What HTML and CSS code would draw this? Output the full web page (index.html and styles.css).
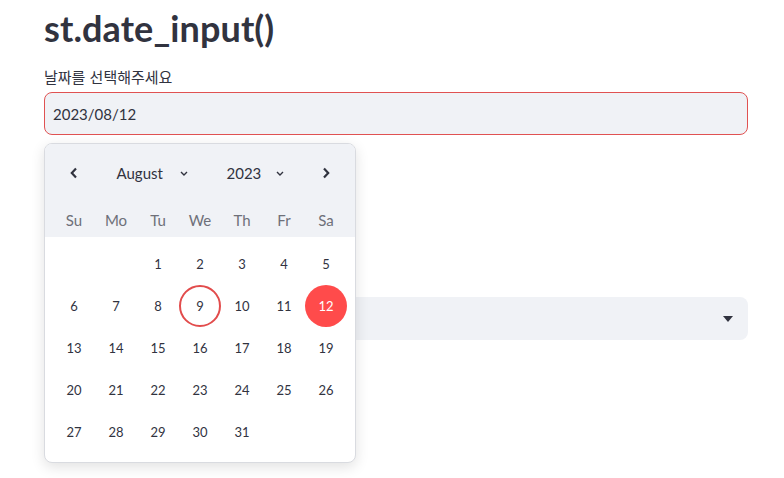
FILE: index.html
```html
<!DOCTYPE html>
<html lang="ko">
<head>
<meta charset="utf-8">
<link rel="stylesheet" href="styles.css">
</head>
<body>
<main class="main">
  <h1 class="title">st.date_input()</h1>
  <label class="label">날짜를 선택해주세요</label>
  <div class="date-input">2023/08/12</div>
  <div class="select-label">&nbsp;</div>
  <div class="selectbox">
    <svg class="caret" width="10" height="6" viewBox="0 0 10 6"><path d="M0 0 L10 0 L5 6 Z" fill="#31333f"/></svg>
  </div>
</main>

<div class="popover">
  <div class="cal-head">
    <div class="nav">
      <div class="nav-btn">
        <svg width="8" height="12" viewBox="0 0 8 12"><path d="M6 1.5 L1.8 6 L6 10.5" fill="none" stroke="#31333f" stroke-width="2.2" stroke-linejoin="miter"/></svg>
      </div>
      <div class="nav-mid">
        <div class="pick month">August
          <svg width="8" height="5" viewBox="0 0 8 5"><path d="M1 1 L4 4 L7 1" fill="none" stroke="#31333f" stroke-width="1.4"/></svg>
        </div>
        <div class="pick year">2023
          <svg width="8" height="5" viewBox="0 0 8 5"><path d="M1 1 L4 4 L7 1" fill="none" stroke="#31333f" stroke-width="1.4"/></svg>
        </div>
      </div>
      <div class="nav-btn">
        <svg width="8" height="12" viewBox="0 0 8 12"><path d="M2 1.5 L6.2 6 L2 10.5" fill="none" stroke="#31333f" stroke-width="2.2" stroke-linejoin="miter"/></svg>
      </div>
    </div>
    <div class="weekdays">
      <span>Su</span><span>Mo</span><span>Tu</span><span>We</span><span>Th</span><span>Fr</span><span>Sa</span>
    </div>
  </div>
  <div class="days">
    <span></span><span></span><span>1</span><span>2</span><span>3</span><span>4</span><span>5</span>
    <span>6</span><span>7</span><span>8</span><span class="today">9</span><span>10</span><span>11</span><span class="selected">12</span>
    <span>13</span><span>14</span><span>15</span><span>16</span><span>17</span><span>18</span><span>19</span>
    <span>20</span><span>21</span><span>22</span><span>23</span><span>24</span><span>25</span><span>26</span>
    <span>27</span><span>28</span><span>29</span><span>30</span><span>31</span><span></span><span></span>
  </div>
</div>
</body>
</html>
```

FILE: styles.css
```css
* { box-sizing: border-box; }

body {
  margin: 0;
  background: #ffffff;
  font-family: Lato, "Noto Sans CJK KR", sans-serif;
  color: #31333f;
}

.main {
  width: 704px;
  margin-left: 44px;
  display: flex;
  flex-direction: column;
}

.title {
  margin: 0;
  padding-top: 6px;
  font-size: 36px;
  line-height: 44px;
  font-weight: 700;
  letter-spacing: 0.1px;
  color: #31333f;
}

.label {
  margin-top: 16px;
  font-family: "Noto Sans CJK KR", sans-serif;
  font-size: 15px;
  line-height: 21px;
  color: #31333f;
}

.date-input {
  margin-top: 5px;
  height: 43px;
  background: #f0f2f6;
  border: 1px solid #e05252;
  border-radius: 8px;
  padding-left: 8px;
  display: flex;
  align-items: center;
  font-size: 15px;
  color: #31333f;
}

.select-label {
  height: 162px;
}

.selectbox {
  height: 43px;
  background: #f0f2f6;
  border-radius: 8px;
  display: flex;
  align-items: center;
  justify-content: flex-end;
  padding-right: 15px;
}

.popover {
  position: absolute;
  left: 44px;
  top: 143px;
  width: 312px;
  height: 320px;
  background: #ffffff;
  border: 1px solid #d9dbe0;
  border-radius: 8px;
  box-shadow: 0 4px 14px rgba(0, 0, 0, 0.12);
  overflow: hidden;
}

.cal-head {
  background: #f0f2f6;
  padding: 8px 8px 0 8px;
  height: 93px;
}

.nav {
  display: flex;
  height: 42px;
  align-items: center;
}

.nav-btn {
  width: 42px;
  height: 42px;
  display: flex;
  align-items: center;
  justify-content: center;
}

.nav-mid {
  flex: 1;
  display: flex;
  justify-content: center;
  gap: 39px;
}

.pick {
  display: flex;
  align-items: center;
  justify-content: space-between;
  font-size: 15px;
  color: #31333f;
}

.month { width: 71px; }
.year { width: 57px; }

.weekdays {
  margin-top: 10px;
  display: grid;
  grid-template-columns: repeat(7, 42px);
  height: 32px;
  align-items: center;
}

.weekdays span {
  text-align: center;
  font-size: 15px;
  color: #6e7079;
}

.days {
  padding: 6px 8px 0 8px;
  display: grid;
  grid-template-columns: repeat(7, 42px);
  grid-auto-rows: 42px;
}

.days span {
  display: flex;
  align-items: center;
  justify-content: center;
  font-size: 13px;
  color: #31333f;
  border-radius: 50%;
}

.days .today {
  border: 2px solid #e24c4c;
}

.days .selected {
  background: #ff4b4b;
  color: #ffffff;
}
```
